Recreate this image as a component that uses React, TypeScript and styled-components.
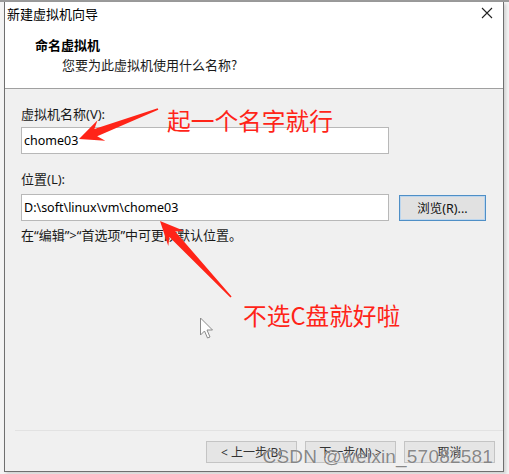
import React from "react";
import styled, { createGlobalStyle } from "styled-components";

const GlobalStyle = createGlobalStyle`
  html, body { margin: 0; padding: 0; }
  body {
    background: #f4f4f4;
    font-family: "Noto Sans", "Noto Sans CJK SC", sans-serif;
    overflow: hidden;
  }
`;

const Page = styled.div`
  position: relative;
  width: 509px;
  height: 474px;
  border-top: 2px solid #9a9a9a;
  box-sizing: border-box;
`;

const Window = styled.div`
  margin-left: 4px;
  width: 500px;
  height: 470px;
  box-sizing: border-box;
  border: 1px solid #6f6f6f;
  border-top: none;
  background: #f0f0f0;
  display: flex;
  flex-direction: column;
  box-shadow: 2px 2px 3px rgba(0, 0, 0, 0.15);
`;

const TitleBar = styled.div`
  height: 25px;
  background: #fff;
  display: flex;
  align-items: center;
  justify-content: space-between;
  padding: 0 10px 0 2px;
`;

const TitleText = styled.span`
  font-family: "Noto Sans CJK SC", sans-serif;
  font-size: 13px;
  color: #000;
  line-height: 16px;
  margin-top: -1px;
`;

const CloseIcon = styled.svg`
  width: 12px;
  height: 12px;
  margin-top: -4px;
`;

const Header = styled.div`
  height: 62px;
  background: #fff;
  border-bottom: 1px solid #a0a0a0;
  display: flex;
  flex-direction: column;
  padding: 10px 0 0 30px;
  box-sizing: border-box;
`;

const HeaderTitle = styled.div`
  font-family: "Noto Sans CJK SC", sans-serif;
  font-weight: bold;
  font-size: 13px;
  line-height: 16px;
  color: #000;
`;

const HeaderSub = styled.div`
  font-family: "Noto Sans CJK SC", sans-serif;
  font-size: 13px;
  line-height: 16px;
  color: #1a1a1a;
  margin: 4px 0 0 27px;
`;

const Body = styled.div`
  flex: 1;
  display: flex;
  flex-direction: column;
  padding: 17px 0 0 16px;
`;

const Label = styled.div<{ $top: number }>`
  font-family: "Noto Sans", "Noto Sans CJK SC", sans-serif;
  font-size: 13px;
  line-height: 16px;
  color: #1a1a1a;
  margin-top: ${(p) => p.$top}px;
`;

const Field = styled.div<{ $top: number }>`
  width: 368px;
  height: 27px;
  box-sizing: border-box;
  border: 1px solid #b8b8b8;
  background: #fff;
  margin-top: ${(p) => p.$top}px;
  display: flex;
  align-items: center;
  padding-left: 2px;
  font-family: "Noto Sans", sans-serif;
  font-size: 12.5px;
  color: #000;
`;

const Row = styled.div`
  display: flex;
  align-items: center;
  gap: 10px;
  margin-top: 7px;
`;

const BrowseButton = styled.div`
  width: 87px;
  height: 26px;
  box-sizing: border-box;
  border: 1px solid #4f8fc6;
  background: #e1e1e1;
  display: flex;
  align-items: center;
  justify-content: center;
  font-family: "Noto Sans", "Noto Sans CJK SC", sans-serif;
  font-size: 12.5px;
  color: #111;
  box-shadow: inset 0 0 0 1px #bcd6ee;
`;

const Hint = styled.div`
  font-family: "Noto Sans", "Noto Sans CJK SC", sans-serif;
  font-size: 13px;
  line-height: 16px;
  color: #1a1a1a;
  margin-top: 6px;
`;

const Footer = styled.div`
  border-top: 1px solid #e2e2e2;
  margin: 0 0 0 10px;
  height: 41px;
  display: flex;
  justify-content: flex-end;
  align-items: flex-start;
  padding: 10px 8px 0 0;
  box-sizing: border-box;
  gap: 8px;
`;

const FooterButton = styled.div`
  width: 91px;
  height: 22px;
  box-sizing: border-box;
  border: 1px solid #c4c4c4;
  background: #e5e5e5;
  display: flex;
  align-items: center;
  justify-content: center;
  font-family: "Noto Sans", "Noto Sans CJK SC", sans-serif;
  font-size: 12px;
  color: #333;
`;

const Note = styled.div<{ $x: number; $y: number }>`
  position: absolute;
  left: ${(p) => p.$x}px;
  top: ${(p) => p.$y}px;
  font-family: "Noto Sans CJK SC", sans-serif;
  font-size: 23.7px;
  line-height: 26px;
  color: #ff2418;
  white-space: nowrap;
`;

const Overlay = styled.svg`
  position: absolute;
  left: 0;
  top: 0;
  width: 509px;
  height: 474px;
  pointer-events: none;
`;

const Watermark = styled.div`
  position: absolute;
  right: 16px;
  top: 444px;
  font-family: "Liberation Sans", sans-serif;
  font-size: 19px;
  line-height: 22px;
  color: rgba(105, 105, 105, 0.8);
  letter-spacing: 0.2px;
  white-space: nowrap;
  text-shadow: 0 0 1px rgba(255, 255, 255, 0.9);
`;

function arrowPoints(tx: number, ty: number, hx: number, hy: number) {
  const dx = hx - tx;
  const dy = hy - ty;
  const len = Math.sqrt(dx * dx + dy * dy);
  const ux = dx / len;
  const uy = dy / len;
  const nx = -uy;
  const ny = ux;
  const headLen = 24;
  const headW = 11;
  const neckW = 4;
  const tailW = 0.8;
  const bx = hx - ux * headLen;
  const by = hy - uy * headLen;
  const nbx = hx - ux * (headLen - 6);
  const nby = hy - uy * (headLen - 6);
  const pts = [
    [tx + nx * tailW, ty + ny * tailW],
    [nbx + nx * neckW, nby + ny * neckW],
    [bx + nx * headW, by + ny * headW],
    [hx, hy],
    [bx - nx * headW, by - ny * headW],
    [nbx - nx * neckW, nby - ny * neckW],
    [tx - nx * tailW, ty - ny * tailW],
  ];
  return pts.map((p) => `${p[0].toFixed(1)},${p[1].toFixed(1)}`).join(" ");
}

export default function App() {
  return (
    <>
      <GlobalStyle />
      <Page>
        <Window>
          <TitleBar>
            <TitleText>新建虚拟机向导</TitleText>
            <CloseIcon viewBox="0 0 12 12">
              <path d="M1 1 L11 11 M11 1 L1 11" stroke="#222" strokeWidth="1.1" fill="none" />
            </CloseIcon>
          </TitleBar>
          <Header>
            <HeaderTitle>命名虚拟机</HeaderTitle>
            <HeaderSub>您要为此虚拟机使用什么名称?</HeaderSub>
          </Header>
          <Body>
            <Label $top={0}>虚拟机名称(V):</Label>
            <Field $top={5}>chome03</Field>
            <Label $top={17}>位置(L):</Label>
            <Row>
              <Field $top={0}>D:\soft\linux\vm\chome03</Field>
              <BrowseButton>浏览(R)...</BrowseButton>
            </Row>
            <Hint>在“编辑”&gt;“首选项”中可更改默认位置。</Hint>
          </Body>
          <Footer>
            <FooterButton>&lt; 上一步(B)</FooterButton>
            <FooterButton>下一步(N) &gt;</FooterButton>
            <FooterButton>取消</FooterButton>
          </Footer>
        </Window>
        <Overlay viewBox="0 0 509 474">
          <polygon points={arrowPoints(158, 107, 79, 137)} fill="#ff2418" />
          <polygon points={arrowPoints(231, 295, 160, 219)} fill="#ff2418" />
          <path
            d="M200.5 316 L200.5 333 L204.5 329 L207.5 336 L210 335 L207 328 L212.5 328 Z"
            fill="#fff"
            stroke="#8a8a8a"
            strokeWidth="1"
            strokeLinejoin="round"
          />
        </Overlay>
        <Note $x={167} $y={105}>起一个名字就行</Note>
        <Note $x={243} $y={300}>不选C盘就好啦</Note>
        <Watermark>CSDN @weixin_57082581</Watermark>
      </Page>
    </>
  );
}
